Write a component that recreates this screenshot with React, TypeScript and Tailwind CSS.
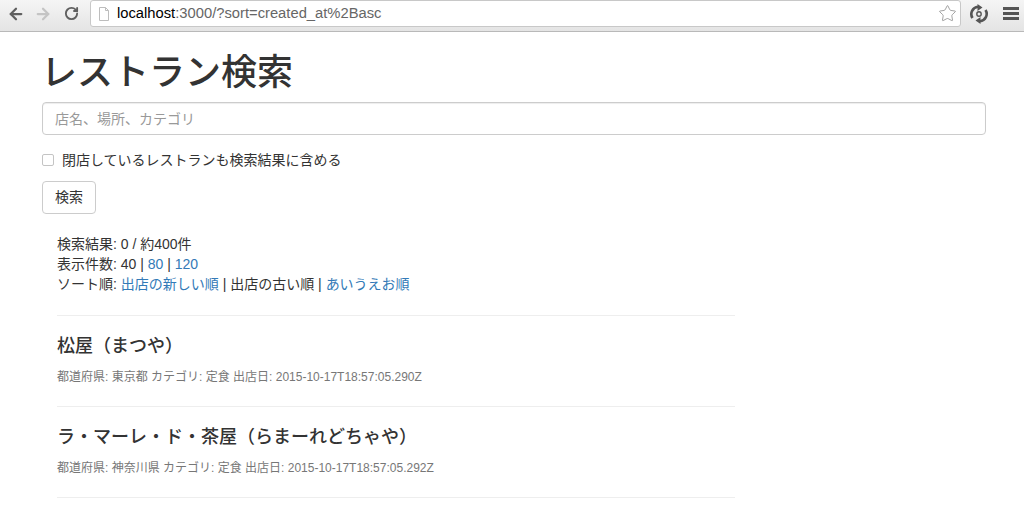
import { ArrowLeft, ArrowRight, RotateCw, Star } from "lucide-react";

const font = { fontFamily: '"Liberation Sans", "Noto Sans CJK JP", sans-serif' };

function Restaurant({ name, pref, date }: { name: string; pref: string; date: string }) {
  return (
    <div className="h-[91px] border-t border-[#eeeeee] pt-[20px]">
      <h3 className="text-[18px] leading-[20px] font-medium text-[#333333]">{name}</h3>
      <p className="mt-[13px] text-[12px] leading-[17px] text-[#777777]">
        都道府県: {pref} カテゴリ: 定食 出店日: {date}
      </p>
    </div>
  );
}

export default function App() {
  return (
    <div style={font} className="h-[506px] w-[1024px] overflow-hidden bg-white text-[#333333]">
      <div className="flex h-[32px] items-center border-b border-[#b9b9b9] bg-gradient-to-b from-[#f5f5f5] to-[#e4e4e4] pb-[4px] pl-[7px]">
        <ArrowLeft size={18} strokeWidth={3} className="text-[#5f5f5f]" />
        <ArrowRight size={18} strokeWidth={3} className="ml-[9px] text-[#c4c4c4]" />
        <RotateCw size={15} strokeWidth={3} className="ml-[12px] text-[#5f5f5f]" />
        <div className="ml-[11px] flex h-[27px] w-[871px] items-center rounded-[3px] border border-[#c8c8c8] bg-white pl-[7px]">
          <svg width="12" height="14" viewBox="0 0 12 14" fill="none" stroke="#bdbdbd">
            <path d="M1.5 .5h6l3 3v10h-9z M7.5 .5v3h3" />
          </svg>
          <span className="ml-[7px] text-[14.75px] text-[#666666]">
            <span className="text-black">localhost</span>:3000/?sort=created_at%2Basc
          </span>
          <Star size={19} strokeWidth={1} className="mr-[3px] ml-auto text-[#8a8a8a]" />
        </div>
        <svg width="20" height="20" viewBox="0 0 20 20" className="ml-[8px]" fill="none">
          <path d="M3.5 14A7.3 7.3 0 0 1 9 2.8" stroke="#555" strokeWidth="2.6" />
          <path d="M16.5 6A7.3 7.3 0 0 1 11 17.2" stroke="#555" strokeWidth="2.6" />
          <path d="M8.5 0l5 3.5-5 3.5z M11.5 20l-5-3.5 5-3.5z" fill="#555" />
          <circle cx="10" cy="10" r="2.2" stroke="#555" strokeWidth="1.4" />
        </svg>
        <div className="ml-[14px] flex flex-col gap-[2px]">
          <div className="h-[3px] w-[16px] bg-[#555555]" />
          <div className="h-[3px] w-[16px] bg-[#555555]" />
          <div className="h-[3px] w-[16px] bg-[#555555]" />
        </div>
      </div>

      <div className="ml-[42px] w-[944px]">
        <h1 className="mt-[17px] ml-[-1px] h-[53px] text-[36px] leading-[48px] font-medium text-[#333333]">レストラン検索</h1>
        <input
          placeholder="店名、場所、カテゴリ"
          className="block h-[33px] w-full rounded-[4px] border border-[#cccccc] px-[12px] text-[14px] shadow-[inset_0_1px_1px_rgba(0,0,0,0.075)] placeholder:text-[#999999]"
        />
        <label className="mt-[15px] flex h-[20px] items-center text-[14px]">
          <input type="checkbox" className="h-[12px] w-[12px] appearance-none rounded-[2px] border border-[#c4c4c4] bg-white" />
          <span className="ml-[8px]">閉店しているレストランも検索結果に含める</span>
        </label>
        <button className="mt-[11px] block h-[33px] w-[54px] rounded-[4px] border border-[#cccccc] bg-white text-[14px]">検索</button>

        <div className="mt-[20px] w-[693px] pl-[15px]">
          <div className="h-[81px] text-[14px] leading-[20px]">
            <div>検索結果: 0 / 約400件</div>
            <div>
              表示件数: 40 | <a className="text-[#337ab7]">80</a> | <a className="text-[#337ab7]">120</a>
            </div>
            <div>
              ソート順: <a className="text-[#337ab7]">出店の新しい順</a> | 出店の古い順 | <a className="text-[#337ab7]">あいうえお順</a>
            </div>
          </div>
          <Restaurant name="松屋（まつや）" pref="東京都" date="2015-10-17T18:57:05.290Z" />
          <Restaurant name="ラ・マーレ・ド・茶屋（らまーれどちゃや）" pref="神奈川県" date="2015-10-17T18:57:05.292Z" />
          <div className="border-t border-[#eeeeee]" />
        </div>
      </div>
    </div>
  );
}
